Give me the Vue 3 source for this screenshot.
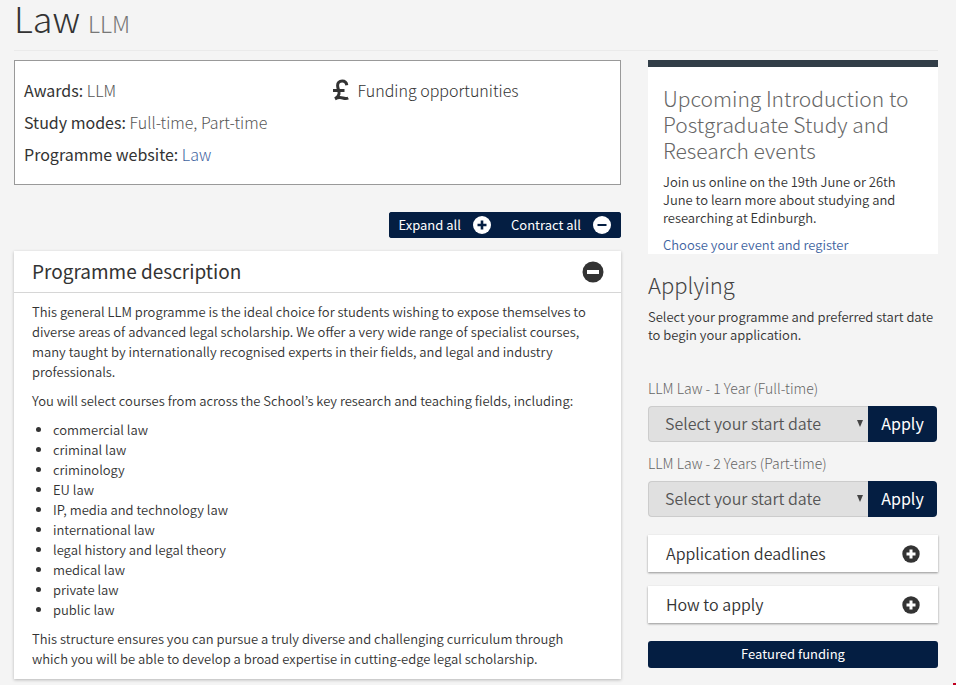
<script setup>
import { ref } from 'vue'

const areas = [
  'commercial law',
  'criminal law',
  'criminology',
  'EU law',
  'IP, media and technology law',
  'international law',
  'legal history and legal theory',
  'medical law',
  'private law',
  'public law',
]
const programmes = [
  { id: 'full-time', label: 'LLM Law - 1 Year (Full-time)' },
  { id: 'part-time', label: 'LLM Law - 2 Years (Part-time)' },
]
const panels = ['Application deadlines', 'How to apply']
const open = ref(true)
</script>

<template>
  <div class="page">
    <header class="title">
      <h1>Law <small>LLM</small></h1>
    </header>
    <div class="columns">
      <main>
        <section class="summary">
          <div class="facts">
            <p>Awards: <span>LLM</span></p>
            <p>Study modes: <span>Full-time, Part-time</span></p>
            <p>Programme website: <a href="#law">Law</a></p>
          </div>
          <a class="funding" href="#funding">
            <svg width="18" height="22" viewBox="0 0 18 22" aria-hidden="true">
              <path d="M14.8 6.2C14.4 3.2 12.6 2 10.2 2C7.2 2 5.6 3.8 5.6 6.4C5.6 10 7.8 12.2 7 15.2C6.5 17.2 5 18.6 3 19.8C6.6 18 8.6 18.4 10.8 19C13 19.7 14.6 19.8 16.2 19M1 11.4H12.5" fill="none" stroke="currentColor" stroke-width="3" />
            </svg>
            <span>Funding opportunities</span>
          </a>
        </section>

        <div class="toolbar">
          <button type="button" @click="open = true">
            Expand all
            <svg width="18" height="18" viewBox="0 0 18 18" aria-hidden="true">
              <circle cx="9" cy="9" r="9" fill="#fff" />
              <path d="M4.5 9h9M9 4.5v9" stroke="#041e42" stroke-width="2.6" />
            </svg>
          </button>
          <button type="button" @click="open = false">
            Contract all
            <svg width="18" height="18" viewBox="0 0 18 18" aria-hidden="true">
              <circle cx="9" cy="9" r="9" fill="#fff" />
              <path d="M4.5 9h9" stroke="#041e42" stroke-width="2.2" />
            </svg>
          </button>
        </div>

        <section class="description">
          <h2>
            <button type="button" :aria-expanded="open" @click="open = !open">
              <span>Programme description</span>
              <svg width="22" height="22" viewBox="0 0 22 22" aria-hidden="true">
                <circle cx="11" cy="11" r="10.5" fill="#333" />
                <rect x="5" y="9" width="12" height="4" fill="#fff" />
                <rect v-if="!open" x="9" y="5" width="4" height="12" fill="#fff" />
              </svg>
            </button>
          </h2>
          <div v-show="open" class="body">
            <p>This general LLM programme is the ideal choice for students wishing to expose themselves to diverse areas of advanced legal scholarship. We offer a very wide range of specialist courses, many taught by internationally recognised experts in their fields, and legal and industry professionals.</p>
            <p>You will select courses from across the School’s key research and teaching fields, including:</p>
            <ul>
              <li v-for="area in areas" :key="area">{{ area }}</li>
            </ul>
            <p>This structure ensures you can pursue a truly diverse and challenging curriculum through which you will be able to develop a broad expertise in cutting-edge legal scholarship.</p>
          </div>
        </section>
      </main>

      <aside>
        <section class="events">
          <h2>Upcoming Introduction to Postgraduate Study and Research events</h2>
          <p>Join us online on the 19th June or 26th June to learn more about studying and researching at Edinburgh.</p>
          <a href="#events">Choose your event and register</a>
        </section>

        <section class="applying">
          <h2>Applying</h2>
          <p>Select your programme and preferred start date to begin your application.</p>
          <form v-for="p in programmes" :key="p.id" @submit.prevent>
            <label :for="p.id">{{ p.label }}</label>
            <div class="group">
              <div class="picker">
                <select :id="p.id">
                  <option>Select your start date</option>
                </select>
                <svg width="6" height="7" viewBox="0 0 6 7" aria-hidden="true">
                  <path d="M0 0h6L3 7z" fill="#444" />
                </svg>
              </div>
              <button type="submit">Apply</button>
            </div>
          </form>
        </section>

        <button v-for="name in panels" :key="name" type="button" class="panel">
          <span>{{ name }}</span>
          <svg width="18" height="18" viewBox="0 0 18 18" aria-hidden="true">
            <circle cx="9" cy="9" r="8.7" fill="#333" />
            <path d="M4.5 9h9M9 4.5v9" stroke="#fff" stroke-width="3" />
          </svg>
        </button>

        <a class="featured" href="#featured-funding">Featured funding</a>
      </aside>
    </div>
    <span class="corner"></span>
  </div>
</template>

<style>
body {
  background: #f4f4f4;
}
</style>

<style scoped>
.page {
  position: relative;
  box-sizing: border-box;
  padding: 0 18px 6px 14px;
  color: #333;
  font-family: "Noto Sans CJK KR", "Open Sans", sans-serif;
  font-size: 13px;
  font-weight: 350;
  line-height: 20px;
}
h1, h2, p, ul { margin: 0; }
h1, h2 { font-weight: 300; }
a { color: #3f649f; text-decoration: none; }
button, select { font: inherit; color: inherit; border: 0; margin: 0; padding: 0; cursor: pointer; }
svg { display: block; flex: none; }

.title { border-bottom: 1px solid #eaeaea; margin-bottom: 9px; }
h1 { font-size: 36px; line-height: 34px; padding-bottom: 15px; }
h1 small { font-size: 23px; line-height: 1; color: #777; }

.columns {
  display: grid;
  grid-template-columns: minmax(0, 607fr) minmax(0, 290fr);
  gap: 27px;
  align-items: start;
}

.summary {
  display: grid;
  grid-template-columns: 1fr 1fr;
  gap: 10px;
  padding: 13px 9px 14px;
  border: 1px solid #999;
  background: #fff;
  font-size: 16px;
  line-height: 32px;
}
.facts { font-weight: 400; }
.facts span, .facts a { font-weight: 300; }
.facts span { color: #555; }
.funding { display: flex; align-items: center; gap: 8px; height: 32px; padding-left: 9px; color: #333; font-weight: 300; }

.toolbar {
  display: flex;
  width: max-content;
  margin: 27px 0 13px auto;
  border-radius: 3px;
  overflow: hidden;
  background: #041e42;
}
.toolbar button {
  display: flex;
  align-items: center;
  gap: 12px;
  height: 26px;
  padding: 0 10px;
  background: #041e42;
  color: #fff;
  font-weight: 400;
}

.description { background: #fff; box-shadow: 0 1px 3px rgba(0, 0, 0, 0.25); }
.description h2 { border-bottom: 1px solid #d6d6d6; }
.description h2 button {
  display: flex;
  align-items: center;
  justify-content: space-between;
  width: 100%;
  height: 41px;
  padding: 0 17px 0 18px;
  background: none;
  font-size: 19px;
  font-weight: 400;
}
.description h2 span, .panel span { padding-bottom: 2px; }
.body { padding: 9px 26px 10px 18px; }
.body p + p, .body ul, .body ul + p { margin-top: 9px; }
.body ul { padding-left: 21px; }

.events {
  padding: 18px 15px 0;
  border-top: 7px solid #323e48;
  background: #fff;
  line-height: 18px;
}
aside h2 { color: #444; font-size: 22px; line-height: 26px; }
.events h2 { color: #666; font-size: 21px; }
.events p { margin: 10px 0 9px; }
.events a { display: block; }
.applying h2 { margin: 17px 0 11px; }
.applying p { line-height: 18px; margin-bottom: 34px; }
.applying form { margin-bottom: 11px; }
.applying label { display: block; padding-bottom: 8px; color: #666; font-size: 14px; font-weight: 300; }
.group { display: flex; margin-right: 1px; font-size: 16px; }
.picker { position: relative; flex: 1; }
.picker select {
  appearance: none;
  box-sizing: border-box;
  width: 100%;
  height: 36px;
  padding: 0 16px 2px;
  border: 1px solid #ccc;
  border-right: 0;
  border-radius: 4px 0 0 4px;
  background: #e0e0e0;
  color: #555;
}
.picker svg { position: absolute; right: 5px; top: 14px; pointer-events: none; }
.group button {
  min-width: 69px;
  padding: 0 0 2px;
  border-radius: 0 4px 4px 0;
  background: #041e42;
  color: #fff;
  font-weight: 400;
}
.panel {
  display: flex;
  align-items: center;
  justify-content: space-between;
  width: 100%;
  height: 37px;
  margin-top: 14px;
  padding: 0 18px;
  background: #fff;
  box-shadow: 0 1px 2px rgba(0, 0, 0, 0.4);
  font-size: 16px;
}
.applying + .panel { margin-top: 18px; }
.featured {
  display: block;
  margin-top: 18px;
  padding: 3px 0 4px;
  border-radius: 3px;
  background: #041e42;
  color: #fff;
  font-weight: 400;
  text-align: center;
}
.corner { position: absolute; right: 0; bottom: 0; width: 3px; height: 2px; background: #c00020; }
</style>
